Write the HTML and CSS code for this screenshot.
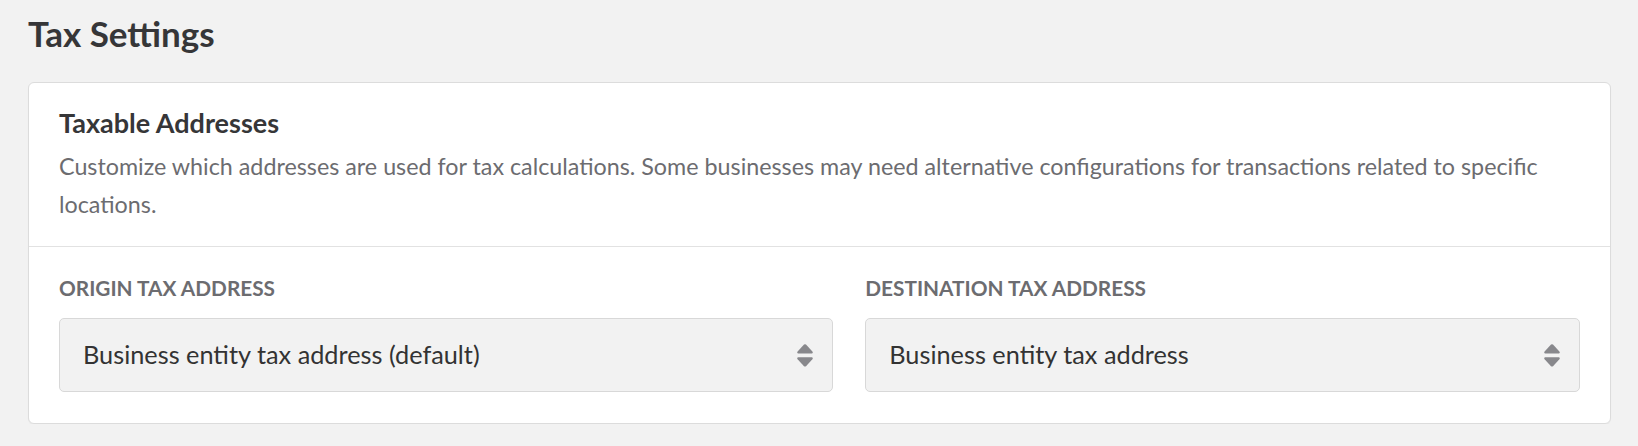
FILE: index.html
```html
<!DOCTYPE html>
<html lang="en">
<head>
<meta charset="utf-8">
<title>Tax Settings</title>
<link rel="stylesheet" href="styles.css">
</head>
<body>
<main class="page">
  <h1 class="page-title">Tax Settings</h1>
  <section class="card">
    <div class="card-head">
      <h2 class="card-title">Taxable Addresses</h2>
      <p class="card-desc">Customize which addresses are used for tax calculations. Some businesses may need alternative configurations for transactions related to specific locations.</p>
    </div>
    <div class="card-body">
      <div class="field">
        <label class="field-label">ORIGIN TAX ADDRESS</label>
        <div class="select">
          <span class="select-value">Business entity tax address (default)</span>
          <svg class="select-arrow" width="16" height="23" viewBox="0 0 16 23" aria-hidden="true">
            <path d="M7 0.6 Q8 -0.2 9 0.6 L15.4 7.6 Q16.4 8.9 15 9.6 L1 9.6 Q-0.4 8.9 0.6 7.6 Z"/>
            <path d="M1 13.2 L15 13.2 Q16.4 13.9 15.4 15.2 L9 22.2 Q8 23 7 22.2 L0.6 15.2 Q-0.4 13.9 1 13.2 Z"/>
          </svg>
        </div>
      </div>
      <div class="field">
        <label class="field-label">DESTINATION TAX ADDRESS</label>
        <div class="select">
          <span class="select-value">Business entity tax address</span>
          <svg class="select-arrow" width="16" height="23" viewBox="0 0 16 23" aria-hidden="true">
            <path d="M7 0.6 Q8 -0.2 9 0.6 L15.4 7.6 Q16.4 8.9 15 9.6 L1 9.6 Q-0.4 8.9 0.6 7.6 Z"/>
            <path d="M1 13.2 L15 13.2 Q16.4 13.9 15.4 15.2 L9 22.2 Q8 23 7 22.2 L0.6 15.2 Q-0.4 13.9 1 13.2 Z"/>
          </svg>
        </div>
      </div>
    </div>
  </section>
</main>
</body>
</html>
```
FILE: styles.css
```css
html, body {
  margin: 0;
  padding: 0;
  background: #f2f2f2;
}
body {
  font-family: "Lato", "Liberation Sans", sans-serif;
  color: #333333;
}
.page {
  padding: 13px 27px 0 28px;
}
.page-title {
  margin: 0;
  font-size: 35px;
  line-height: 40px;
  font-weight: 700;
  color: #363638;
}
.card {
  margin-top: 29px;
  background: #ffffff;
  border: 1px solid #dcdcdc;
  border-radius: 6px;
  box-shadow: 0 1px 1px rgba(0, 0, 0, 0.04);
}
.card-head {
  padding: 24px 30px 23px 30px;
  border-bottom: 1px solid #e2e2e2;
}
.card-title {
  margin: 0;
  font-size: 27px;
  line-height: 32px;
  font-weight: 700;
  color: #363638;
}
.card-desc {
  margin: 9px 0 0 0;
  font-size: 23.3px;
  line-height: 37.6px;
  color: #6c6c70;
}
.card-body {
  display: grid;
  grid-template-columns: 52fr 48fr;
  column-gap: 32px;
  padding: 29px 30px 31px 30px;
}
.field {
  display: flex;
  flex-direction: column;
  gap: 18px;
  min-width: 0;
}
.field-label {
  font-size: 20.8px;
  line-height: 24px;
  font-weight: 700;
  color: #6c6c70;
}
.select {
  display: flex;
  align-items: center;
  justify-content: space-between;
  background: #f2f2f2;
  border: 1px solid #d8d8d8;
  border-radius: 5px;
  padding: 0 19px 0 23px;
  height: 72px;
}
.select-value {
  font-size: 25.3px;
  line-height: 30px;
  color: #333333;
  padding-bottom: 2px;
}
.select-arrow {
  fill: #88888c;
  flex: none;
}
```
